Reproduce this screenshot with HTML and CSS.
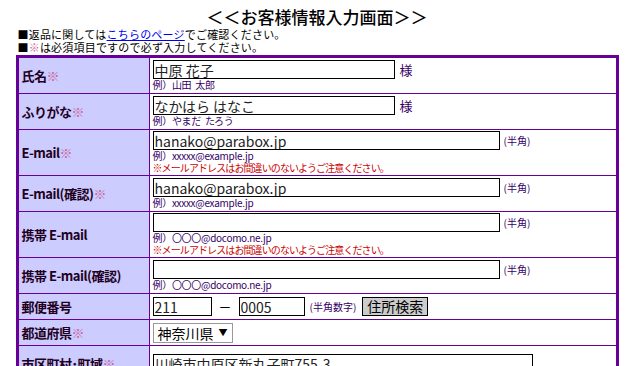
FILE: index.html
```html
<!DOCTYPE html>
<html lang="ja">
<head>
    <meta charset="UTF-8">
    <meta name="viewport" content="width=device-width, initial-scale=1.0">
    <title>お客様情報入力画面</title>
    <link rel="stylesheet" href="styles.css">
</head>
<body>
    <div class="wrapper">
        <h1>＜＜お客様情報入力画面＞＞</h1>
        <p class="note">■返品に関しては<a href="#">こちらのページ</a>でご確認ください。</p>
        <p class="note">■<span class="req">※</span>は必須項目ですので必ず入力してください。</p>

        <form id="customer-form">
            <table class="form-table">
                <tr class="row-name">
                    <th>氏名<span class="req">※</span></th>
                    <td>
                        <div class="field"><input type="text" class="w-name" value="中原 花子"><span class="suffix">様</span></div>
                        <div class="example">例）山田&nbsp;&nbsp;太郎</div>
                    </td>
                </tr>
                <tr class="row-name">
                    <th>ふりがな<span class="req">※</span></th>
                    <td>
                        <div class="field"><input type="text" class="w-name" value="なかはら はなこ"><span class="suffix">様</span></div>
                        <div class="example">例）やまだ&nbsp;&nbsp;たろう</div>
                    </td>
                </tr>
                <tr class="row-tall">
                    <th>E-mail<span class="req">※</span></th>
                    <td>
                        <div class="field"><input type="text" class="w-mail" value="hanako@parabox.jp"><span class="hint">(半角)</span></div>
                        <div class="example">例）xxxxx@example.jp</div>
                        <div class="warn">※メールアドレスはお間違いのないようご注意ください。</div>
                    </td>
                </tr>
                <tr class="row-name">
                    <th>E-mail(確認)<span class="req">※</span></th>
                    <td>
                        <div class="field"><input type="text" class="w-mail" value="hanako@parabox.jp"><span class="hint">(半角)</span></div>
                        <div class="example">例）xxxxx@example.jp</div>
                    </td>
                </tr>
                <tr class="row-tall">
                    <th>携帯 E-mail</th>
                    <td>
                        <div class="field"><input type="text" class="w-mail" value=""><span class="hint">(半角)</span></div>
                        <div class="example">例）〇〇〇@docomo.ne.jp</div>
                        <div class="warn">※メールアドレスはお間違いのないようご注意ください。</div>
                    </td>
                </tr>
                <tr class="row-name">
                    <th>携帯 E-mail(確認)</th>
                    <td>
                        <div class="field"><input type="text" class="w-mail" value=""><span class="hint">(半角)</span></div>
                        <div class="example">例）〇〇〇@docomo.ne.jp</div>
                    </td>
                </tr>
                <tr class="row-short">
                    <th>郵便番号</th>
                    <td>
                        <div class="field">
                            <input type="text" class="w-zip1" value="211">
                            <span class="dash">－</span>
                            <input type="text" class="w-zip2" value="0005">
                            <span class="hint zip-hint">(半角数字)</span>
                            <button type="button" class="search-btn">住所検索</button>
                        </div>
                    </td>
                </tr>
                <tr class="row-short">
                    <th>都道府県<span class="req">※</span></th>
                    <td>
                        <div class="select-box">神奈川県<span class="arrow">▼</span></div>
                    </td>
                </tr>
                <tr class="row-name">
                    <th>市区町村･町域<span class="req">※</span></th>
                    <td>
                        <input type="text" class="w-addr" value="川崎市中原区新丸子町755-3">
                    </td>
                </tr>
            </table>
        </form>
    </div>
</body>
</html>
```

FILE: styles.css
```css
body {
    margin: 0;
    padding: 0;
    font-family: "Noto Sans CJK JP", "Noto Sans", sans-serif;
    color: #000;
    background: #fff;
}

.wrapper {
    width: 603px;
    margin: 0 auto;
}

h1 {
    margin: 0;
    padding-top: 6px;
    font-size: 17px;
    line-height: 22px;
    font-weight: 500;
    text-align: center;
    color: #000;
}

.note {
    margin: 0;
    padding-left: 2px;
    font-size: 11px;
    line-height: 13px;
    letter-spacing: 0.2px;
}

.note a {
    color: #0000ee;
}

.req {
    color: #cc6699;
}

.form-table {
    width: 603px;
    margin-top: 1px;
    border: 3px solid #660099;
    border-spacing: 0;
    border-collapse: separate;
}

.form-table th {
    width: 127px;
    padding: 0 0 0 3px;
    background: #ccccff;
    border-right: 1px solid #660099;
    border-bottom: 1px solid #660099;
    font-size: 13px;
    font-weight: bold;
    text-align: left;
    vertical-align: middle;
    color: #220022;
    letter-spacing: -0.5px;
}

.form-table td {
    padding: 0 0 0 3px;
    border-bottom: 1px solid #660099;
    vertical-align: middle;
    font-size: 10px;
    line-height: 12px;
}

.form-table tr:last-child th,
.form-table tr:last-child td {
    border-bottom: none;
}

.row-name th, .row-name td { height: 35px; }
.row-tall th, .row-tall td { height: 45px; }
.row-short th, .row-short td { height: 25px; }

.field {
    display: flex;
    align-items: center;
    height: 19px;
}

input[type="text"] {
    box-sizing: border-box;
    height: 19px;
    margin: 0;
    padding: 0 1px;
    border: 1px solid #000;
    font-family: "Noto Sans CJK JP", sans-serif;
    font-size: 14px;
    line-height: 17px;
    color: #222;
    vertical-align: middle;
}

.w-name { width: 242px; }
.w-mail { width: 347px; }
.w-zip1 { width: 59px; }
.w-zip2 { width: 66px; }
.w-addr { width: 380px; }

.suffix {
    margin-left: 5px;
    font-size: 13px;
    color: #330066;
}

.hint {
    margin-left: 4px;
    font-size: 10px;
    color: #330066;
}

.example {
    font-size: 10px;
    line-height: 12px;
    color: #330066;
    letter-spacing: -0.3px;
}

.warn {
    font-size: 10px;
    line-height: 12px;
    color: #cc0000;
    letter-spacing: -0.9px;
}

.dash {
    width: 27px;
    text-align: center;
    font-size: 13px;
}

.zip-hint {
    margin-left: 5px;
    margin-right: 6px;
}

.search-btn {
    height: 19px;
    padding: 0 4px;
    background: #cccccc;
    border: 1px solid #000;
    font-family: "Noto Sans CJK JP", sans-serif;
    font-size: 14px;
    line-height: 17px;
    color: #000;
}

.select-box {
    display: inline-flex;
    align-items: center;
    box-sizing: border-box;
    width: 80px;
    height: 20px;
    padding: 0 4px;
    border: 1px solid #999;
    font-size: 14px;
    color: #000;
}

.arrow {
    margin-left: auto;
    font-size: 9px;
}
```
